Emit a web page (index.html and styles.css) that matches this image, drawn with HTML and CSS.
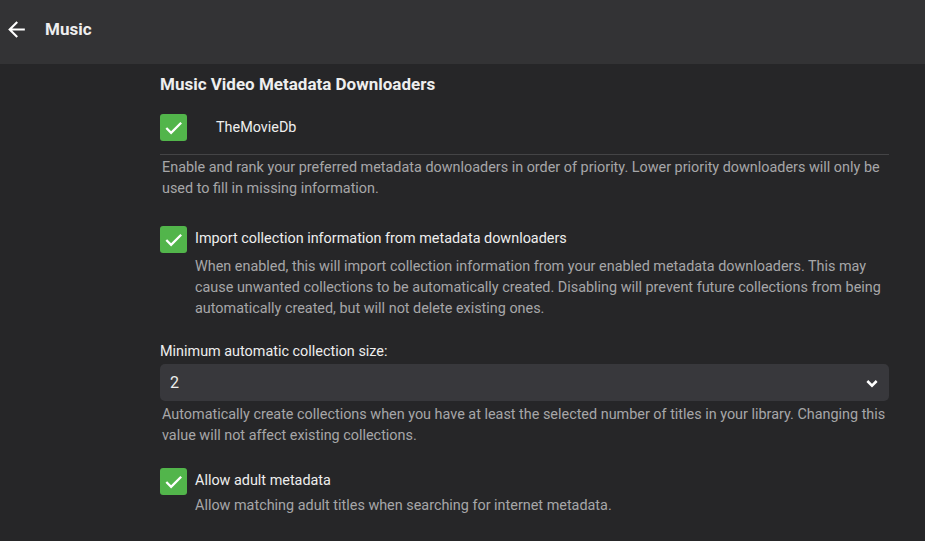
FILE: index.html
```html
<!DOCTYPE html>
<html>
<head>
<meta charset="utf-8">
<link rel="stylesheet" href="styles.css">
</head>
<body>
<header class="header">
  <button class="back" aria-label="Back">
    <svg width="25" height="25" viewBox="0 0 24 24"><path d="M20 11H7.83l5.59-5.59L12 4l-8 8 8 8 1.41-1.41L7.83 13H20v-2z" fill="#fff"/></svg>
  </button>
  <h1 class="title">Music</h1>
</header>
<main class="content">
  <h2 class="section-title">Music Video Metadata Downloaders</h2>
  <div class="downloader-list">
    <label class="downloader">
      <span class="check"><svg viewBox="0 0 24 24"><path d="M4.5 12.5l5 5L20 7" /></svg></span>
      <span class="downloader-name">TheMovieDb</span>
    </label>
  </div>
  <p class="help first-help">Enable and rank your preferred metadata downloaders in order of priority. Lower priority downloaders will only be used to fill in missing information.</p>

  <div class="option opt-import">
    <span class="check"><svg viewBox="0 0 24 24"><path d="M4.5 12.5l5 5L20 7" /></svg></span>
    <div class="option-body">
      <div class="option-label">Import collection information from metadata downloaders</div>
      <div class="option-help">When enabled, this will import collection information from your enabled metadata downloaders. This may cause unwanted collections to be automatically created. Disabling will prevent future collections from being automatically created, but will not delete existing ones.</div>
    </div>
  </div>

  <div class="field">
    <label class="field-label">Minimum automatic collection size:</label>
    <div class="select">
      <span>2</span>
      <svg class="chev" width="16" height="16" viewBox="0 0 24 24"><path d="M5 9l7 7 7-7" /></svg>
    </div>
    <p class="help">Automatically create collections when you have at least the selected number of titles in your library. Changing this value will not affect existing collections.</p>
  </div>

  <div class="option opt-adult">
    <span class="check"><svg viewBox="0 0 24 24"><path d="M4.5 12.5l5 5L20 7" /></svg></span>
    <div class="option-body">
      <div class="option-label">Allow adult metadata</div>
      <div class="option-help adult-help">Allow matching adult titles when searching for internet metadata.</div>
    </div>
  </div>
</main>
</body>
</html>
```
FILE: styles.css
```css
* { box-sizing: border-box; }
html, body { margin: 0; padding: 0; }
body {
  background: #262628;
  color: #fff;
  font-family: Roboto, "Noto Sans", sans-serif;
  font-size: 14.4px;
  width: 925px;
  height: 541px;
  overflow: hidden;
}
.header {
  height: 64px;
  background: #333335;
  display: flex;
  align-items: center;
  padding-left: 4px;
  padding-bottom: 6px;
}
.back {
  background: none;
  border: 0;
  padding: 0;
  width: 25px;
  height: 25px;
  display: flex;
  align-items: center;
  justify-content: center;
}
.title {
  margin: 0 0 0 16px;
  font-size: 17px;
  font-weight: 700;
  color: #eee;
}
.content {
  padding: 0 36px 0 160px;
}
.section-title {
  margin: 10px 0 0;
  font-size: 17px;
  font-weight: 700;
  line-height: 20px;
  color: #eee;
}
.downloader-list {
  border-bottom: 1px solid #444446;
  padding: 20px 0 13px;
}
.downloader {
  display: flex;
  align-items: center;
}
.check {
  width: 27px;
  height: 27px;
  border-radius: 3px;
  background: #52b54b;
  display: flex;
  align-items: center;
  justify-content: center;
  flex: none;
}
.check svg {
  width: 23px;
  height: 23px;
  fill: none;
  stroke: #fff;
  stroke-width: 2.4;
}
.downloader-name {
  margin-left: 29px;
  color: #eee;
}
.help {
  margin: 0;
  padding-left: 2px;
  color: #a6a6a8;
  line-height: 21px;
}
.first-help { margin-top: 2px; }
.option {
  display: flex;
  align-items: flex-start;
}
.opt-import { margin-top: 27px; }
.opt-adult { margin-top: 22px; }
.option-body {
  margin-left: 8px;
  padding-top: 4px;
}
.option-label {
  line-height: 18px;
  color: #eee;
}
.option-help {
  margin-top: 8px;
  color: #a6a6a8;
  line-height: 21px;
}
.adult-help { margin-top: 5px; }
.field { margin-top: 24px; }
.field-label {
  display: block;
  line-height: 18px;
  color: #eee;
}
.select {
  margin-top: 3px;
  height: 37px;
  background: #38383c;
  border-radius: 5px;
  display: flex;
  align-items: center;
  justify-content: space-between;
  padding: 0 9px 0 10px;
  font-size: 16px;
  color: #eee;
  margin-bottom: 3px;
}
.chev {
  fill: none;
  stroke: #fff;
  stroke-width: 3.8;
}
```
